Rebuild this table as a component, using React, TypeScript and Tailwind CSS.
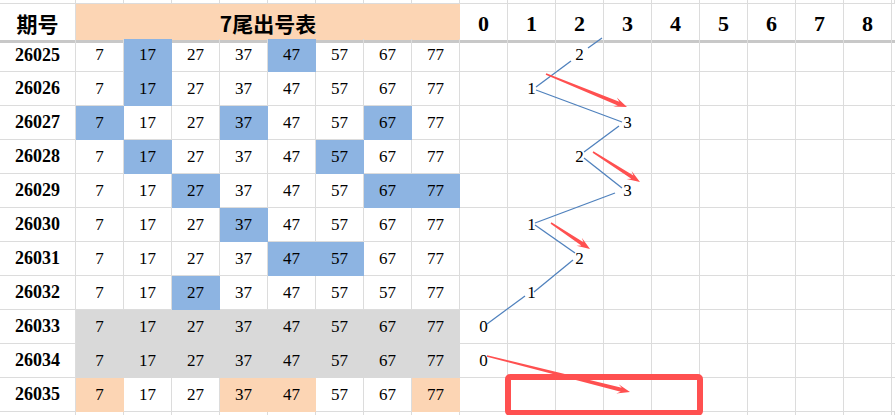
import React from 'react';

type Fill = 'none' | 'blue' | 'gray' | 'peach';

interface Row {
  id: string;
  nums: number[];
  hl: number[];
  fill: Fill;
  val?: number;
}

const base = [7, 17, 27, 37, 47, 57, 67, 77];

const rows: Row[] = [
  { id: '26025', nums: base, hl: [1, 4], fill: 'blue', val: 2 },
  { id: '26026', nums: base, hl: [1], fill: 'blue', val: 1 },
  { id: '26027', nums: base, hl: [0, 3, 6], fill: 'blue', val: 3 },
  { id: '26028', nums: base, hl: [1, 5], fill: 'blue', val: 2 },
  { id: '26029', nums: base, hl: [2, 6, 7], fill: 'blue', val: 3 },
  { id: '26030', nums: base, hl: [3], fill: 'blue', val: 1 },
  { id: '26031', nums: base, hl: [4, 5], fill: 'blue', val: 2 },
  { id: '26032', nums: [7, 17, 27, 37, 47, 57, 57, 77], hl: [2], fill: 'blue', val: 1 },
  { id: '26033', nums: base, hl: [0, 1, 2, 3, 4, 5, 6, 7], fill: 'gray', val: 0 },
  { id: '26034', nums: base, hl: [0, 1, 2, 3, 4, 5, 6, 7], fill: 'gray', val: 0 },
  { id: '26035', nums: base, hl: [0, 3, 4, 7], fill: 'peach' },
];

const fillCls: Record<Fill, string> = {
  none: 'border-[#dcdcdc]',
  blue: 'bg-[#8db4e2] border-[#8db4e2]',
  gray: 'bg-[#d9d9d9] border-[#d9d9d9]',
  peach: 'bg-[#fcd5b4] border-[#fcd5b4]',
};

const gridCols = 'grid grid-cols-[76px_repeat(17,48px)_1fr]';
const cell = 'flex items-center justify-center border-r border-b';
const numFont = "font-['Liberation_Serif',serif] text-[17px] text-black";

// blue zigzag segments (measured in page coords)
const segs: [number, number, number, number][] = [
  [602, 38, 588, 48],
  [571, 61, 536, 87],
  [536, 90, 622, 122],
  [619, 126, 584, 152],
  [584, 158, 622, 188],
  [615, 193, 535, 223],
  [535, 225, 575, 253],
  [573, 260, 534, 292],
  [525, 296, 487, 324],
];

const arrows: [number, number, number, number][] = [
  [546, 74, 627, 107],
  [593, 152, 640, 182],
  [551, 223, 590, 249],
  [487, 356, 630, 392],
];

const arrowPoly = (x1: number, y1: number, x2: number, y2: number) => {
  const dx = x2 - x1;
  const dy = y2 - y1;
  const len = Math.hypot(dx, dy);
  const ux = dx / len;
  const uy = dy / len;
  const nx = -uy;
  const ny = ux;
  const L = 13;
  const W = 4.8;
  const bx = x2 - ux * L;
  const by = y2 - uy * L;
  const kx = x2 - ux * (L * 0.7);
  const ky = y2 - uy * (L * 0.7);
  const w0 = 0.8;
  const w1 = 2;
  const pts = [
    [x1 + nx * w0, y1 + ny * w0],
    [kx + nx * w1, ky + ny * w1],
    [bx + nx * W, by + ny * W],
    [x2, y2],
    [bx - nx * W, by - ny * W],
    [kx - nx * w1, ky - ny * w1],
    [x1 - nx * w0, y1 - ny * w0],
  ];
  return pts.map(p => `${p[0].toFixed(1)},${p[1].toFixed(1)}`).join(' ');
};

export default function App() {
  return (
    <div className="relative w-[895px] h-[415px] overflow-hidden bg-white">
      {/* sliver of the previous sheet row */}
      <div className={`${gridCols} h-[4px]`}>
        {Array.from({ length: 19 }).map((_, i) => (
          <div key={i} className="border-r border-b border-[#dcdcdc]" />
        ))}
      </div>

      {/* header */}
      <div className={`${gridCols} h-[35px]`}>
        <div className="flex items-center justify-center pt-[3px] border-r border-b-[3px] border-r-[#dcdcdc] border-b-[#c8c8c8] font-['Noto_Sans_CJK_SC',sans-serif] font-bold text-[21px] text-black">
          期号
        </div>
        <div className="col-span-8 flex items-center justify-center pt-[3px] bg-[#fcd5b4] border-b-[3px] border-b-[#c8c8c8] font-['Noto_Sans_CJK_SC',sans-serif] font-bold text-[21px] text-black">
          7尾出号表
        </div>
        {Array.from({ length: 9 }).map((_, i) => (
          <div
            key={i}
            className="flex items-center justify-center pt-[3px] border-r border-b-[3px] border-r-[#dcdcdc] border-b-[#c8c8c8] font-['Liberation_Serif',serif] font-bold text-[22px] text-black"
          >
            {i}
          </div>
        ))}
        <div className="border-b-[3px] border-b-[#c8c8c8]" />
      </div>

      {/* data rows */}
      {rows.map((r, ri) => (
        <div key={r.id} className={`${gridCols} ${ri === 0 ? 'h-[33px]' : 'h-[34px]'}`}>
          <div className={`${cell} border-[#dcdcdc] font-['Liberation_Serif',serif] font-bold text-[18px] text-black`}>
            {r.id}
          </div>
          {r.nums.map((n, ci) => (
            <div key={ci} className={`${cell} ${numFont} ${r.hl.includes(ci) ? fillCls[r.fill] : fillCls.none}`}>
              {n}
            </div>
          ))}
          {Array.from({ length: 9 }).map((_, k) => (
            <div key={k} className={`${cell} border-[#dcdcdc] ${numFont}`}>
              {r.val === k ? k : ''}
            </div>
          ))}
          <div className="border-b border-[#dcdcdc]" />
        </div>
      ))}
      <div className={`${gridCols} h-[10px]`}>
        {Array.from({ length: 19 }).map((_, i) => (
          <div key={i} className="border-r border-[#dcdcdc]" />
        ))}
      </div>

      {/* drawn shapes over the sheet */}
      <svg className="absolute inset-0 pointer-events-none" width={895} height={415} viewBox="0 0 895 415">
        {segs.map(([a, b, c, d], i) => (
          <line key={i} x1={a} y1={b} x2={c} y2={d} stroke="#4f81bd" strokeWidth={1.3} />
        ))}
        {arrows.map(([a, b, c, d], i) => (
          <polygon key={i} points={arrowPoly(a, b, c, d)} fill="#ff5050" />
        ))}
        <rect x={508} y={377} width={192} height={36} rx={2} fill="none" stroke="#ff5050" strokeWidth={6} />
      </svg>
    </div>
  );
}
